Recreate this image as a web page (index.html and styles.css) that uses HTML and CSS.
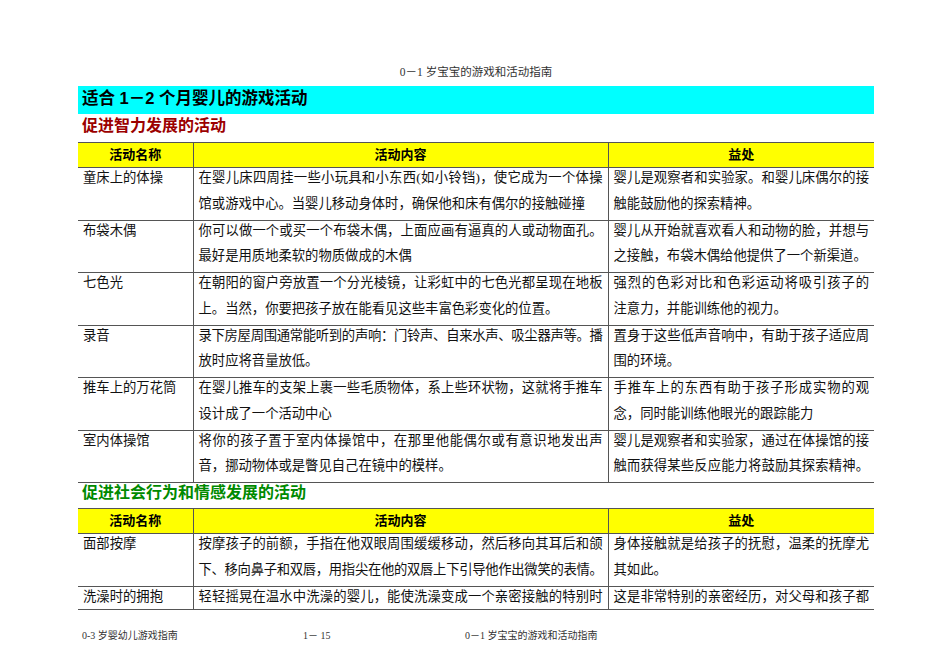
FILE: index.html
```html
<!DOCTYPE html>
<html lang="zh-CN">
<head>
<meta charset="utf-8">
<title>0－1 岁宝宝的游戏和活动指南</title>
<link rel="stylesheet" href="styles.css">
</head>
<body>
<div class="page">
  <div class="running-head">0－1 岁宝宝的游戏和活动指南</div>
  <h1 class="title">适合 1－2 个月婴儿的游戏活动</h1>

  <h2 class="section section-red">促进智力发展的活动</h2>
  <table class="act">
    <colgroup><col class="c-name"><col class="c-content"><col class="c-benefit"></colgroup>
    <thead><tr><th>活动名称</th><th>活动内容</th><th>益处</th></tr></thead>
    <tbody>
      <tr>
        <td><div class="cell"><div class="ln">童床上的体操</div></div></td>
        <td><div class="cell"><div class="ln full">在婴儿床四周挂一些小玩具和小东西(如小铃铛)，使它成为一个体操</div><div class="ln">馆或游戏中心。当婴儿移动身体时，确保他和床有偶尔的接触碰撞</div></div></td>
        <td><div class="cell"><div class="ln full">婴儿是观察者和实验家。和婴儿床偶尔的接</div><div class="ln">触能鼓励他的探索精神。</div></div></td>
      </tr>
      <tr>
        <td><div class="cell"><div class="ln">布袋木偶</div></div></td>
        <td><div class="cell"><div class="ln full">你可以做一个或买一个布袋木偶，上面应画有逼真的人或动物面孔。</div><div class="ln">最好是用质地柔软的物质做成的木偶</div></div></td>
        <td><div class="cell"><div class="ln full">婴儿从开始就喜欢看人和动物的脸，并想与</div><div class="ln">之接触，布袋木偶给他提供了一个新渠道。</div></div></td>
      </tr>
      <tr>
        <td><div class="cell"><div class="ln">七色光</div></div></td>
        <td><div class="cell"><div class="ln full">在朝阳的窗户旁放置一个分光棱镜，让彩虹中的七色光都呈现在地板</div><div class="ln">上。当然，你要把孩子放在能看见这些丰富色彩变化的位置。</div></div></td>
        <td><div class="cell"><div class="ln full">强烈的色彩对比和色彩运动将吸引孩子的</div><div class="ln">注意力，并能训练他的视力。</div></div></td>
      </tr>
      <tr>
        <td><div class="cell"><div class="ln">录音</div></div></td>
        <td><div class="cell"><div class="ln full tight">录下房屋周围通常能听到的声响：门铃声、自来水声、吸尘器声等。播</div><div class="ln">放时应将音量放低。</div></div></td>
        <td><div class="cell"><div class="ln full">置身于这些低声音响中，有助于孩子适应周</div><div class="ln">围的环境。</div></div></td>
      </tr>
      <tr>
        <td><div class="cell"><div class="ln">推车上的万花筒</div></div></td>
        <td><div class="cell"><div class="ln full">在婴儿推车的支架上裹一些毛质物体，系上些环状物，这就将手推车</div><div class="ln">设计成了一个活动中心</div></div></td>
        <td><div class="cell"><div class="ln full">手推车上的东西有助于孩子形成实物的观</div><div class="ln">念，同时能训练他眼光的跟踪能力</div></div></td>
      </tr>
      <tr>
        <td><div class="cell"><div class="ln">室内体操馆</div></div></td>
        <td><div class="cell"><div class="ln full">将你的孩子置于室内体操馆中，在那里他能偶尔或有意识地发出声</div><div class="ln">音，挪动物体或是瞥见自己在镜中的模样。</div></div></td>
        <td><div class="cell"><div class="ln full">婴儿是观察者和实验家，通过在体操馆的接</div><div class="ln full">触而获得某些反应能力将鼓励其探索精神。</div></div></td>
      </tr>
    </tbody>
  </table>

  <h2 class="section section-green">促进社会行为和情感发展的活动</h2>
  <table class="act">
    <colgroup><col class="c-name"><col class="c-content"><col class="c-benefit"></colgroup>
    <thead><tr><th>活动名称</th><th>活动内容</th><th>益处</th></tr></thead>
    <tbody>
      <tr>
        <td><div class="cell"><div class="ln">面部按摩</div></div></td>
        <td><div class="cell"><div class="ln full">按摩孩子的前额，手指在他双眼周围缓缓移动，然后移向其耳后和颌</div><div class="ln full tight">下、移向鼻子和双唇，用指尖在他的双唇上下引导他作出微笑的表情。</div></div></td>
        <td><div class="cell"><div class="ln full">身体接触就是给孩子的抚慰，温柔的抚摩尤</div><div class="ln">其如此。</div></div></td>
      </tr>
      <tr class="cut">
        <td><div class="cell"><div class="ln">洗澡时的拥抱</div></div></td>
        <td><div class="cell"><div class="ln full">轻轻摇晃在温水中洗澡的婴儿，能使洗澡变成一个亲密接触的特别时</div></div></td>
        <td><div class="cell"><div class="ln full">这是非常特别的亲密经历，对父母和孩子都</div></div></td>
      </tr>
    </tbody>
  </table>

  <div class="foot">
    <span class="f1">0-3 岁婴幼儿游戏指南</span>
    <span class="f2">1－ 15</span>
    <span class="f3">0－1 岁宝宝的游戏和活动指南</span>
  </div>
</div>
</body>
</html>
```

FILE: styles.css
```css
html, body {
  margin: 0;
  padding: 0;
  background: #ffffff;
}

body {
  font-family: "Liberation Serif", "Noto Sans CJK SC", serif;
  color: #111111;
}

.page {
  width: 796px;
  padding: 64px 76px 0 78px;
}

.running-head {
  font-size: 11.5px;
  line-height: 16px;
  text-align: center;
  color: #333333;
  margin: 0 0 6px;
}

.title {
  margin: 0;
  background: #00ffff;
  font-family: "Liberation Sans", "Noto Sans CJK SC", sans-serif;
  font-weight: bold;
  font-size: 16.5px;
  line-height: 24px;
  padding: 0 4px 4px;
  color: #000000;
}

.section {
  margin: 0;
  font-family: "Liberation Sans", "Noto Sans CJK SC", sans-serif;
  font-weight: bold;
  font-size: 16px;
  line-height: 24px;
  padding: 0 4px 4px;
}

.section-red {
  color: #9b0000;
}

.section-green {
  color: #008a00;
  line-height: 20px;
  padding-bottom: 5px;
}

.act {
  width: 796px;
  border-collapse: collapse;
  table-layout: fixed;
}

.c-name { width: 115px; }
.c-content { width: 415px; }
.c-benefit { width: 266px; }

.act th {
  background: #ffff00;
  font-family: "Liberation Sans", "Noto Sans CJK SC", sans-serif;
  font-weight: bold;
  font-size: 13px;
  line-height: 24px;
  padding: 0;
  text-align: center;
  color: #000000;
  border-top: 1px solid #555555;
  border-bottom: 1px solid #555555;
}

.act th + th,
.act td + td {
  border-left: 1px solid #555555;
}

.act td {
  vertical-align: top;
  padding: 0 5px 3px;
  border-bottom: 1px solid #555555;
}

.cell {
  margin-top: -3px;
}

.ln {
  font-size: 13.33px;
  line-height: 25.75px;
  text-align: left;
}

.ln.full {
  text-align: justify;
  text-align-last: justify;
}

.ln.tight {
  letter-spacing: -0.35px;
}

.act tr.cut td {
  padding-bottom: 0;
}

.foot {
  display: flex;
  margin-top: 19px;
  padding-left: 4px;
  font-size: 10px;
  line-height: 14px;
  color: #333333;
}

.f1 { width: 221px; }
.f2 { width: 162px; }
```
